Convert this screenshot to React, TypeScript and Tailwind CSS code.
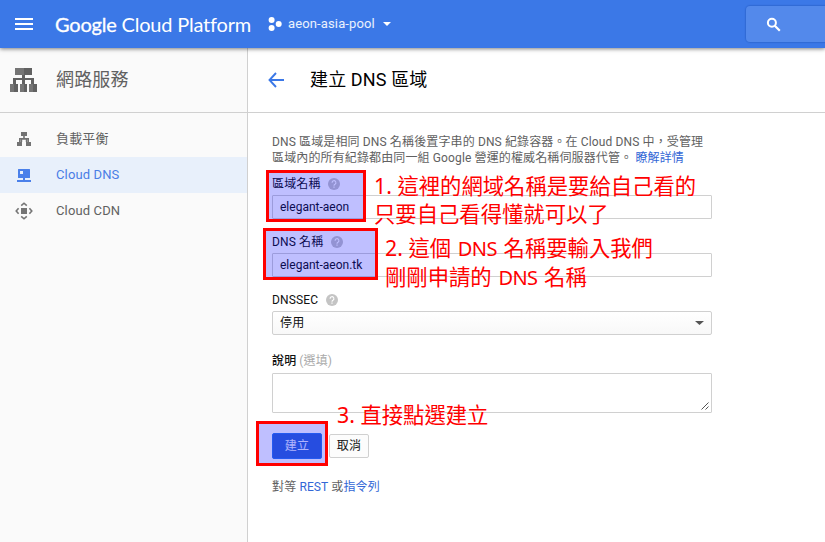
import type { ReactNode } from 'react';

const note = "absolute whitespace-pre text-[21.33px] leading-[28px] tracking-normal text-[#ff0000] font-['Noto_Sans','Noto_Sans_CJK_TC',sans-serif]";
const marker = 'pointer-events-none absolute border-[3px] border-[#ff0000] bg-[#0000ff]/25';

function Header() {
  return (
    <header className="relative z-10 flex h-12 shrink-0 items-center bg-[#3b78e7] text-white shadow-[0_1px_4px_rgba(0,0,0,0.5)]">
      <svg className="ml-[15px] shrink-0" width="18" height="12" fill="#fff">
        <path d="M0 0h18v2H0zM0 5h18v2H0zM0 10h18v2H0z" />
      </svg>
      <div className="ml-[22px] w-[198px] whitespace-nowrap font-['Lato',sans-serif] text-[20px] leading-6 tracking-[-0.2px]">
        <span className="[-webkit-text-stroke:0.3px_white]">Google</span> Cloud Platform
      </div>
      <svg className="ml-[15px] shrink-0" width="14" height="14" fill="#fff">
        <circle cx="3.6" cy="3" r="3" />
        <circle cx="3.6" cy="11" r="3" />
        <circle cx="10.7" cy="7" r="3" />
      </svg>
      <span className="ml-[6px] w-[88px] whitespace-nowrap text-[13px] text-white/90">aeon-asia-pool</span>
      <svg className="ml-[7px]" width="8" height="4" fill="#fff">
        <path d="M0 0h8L4 4z" />
      </svg>
      <div className="ml-auto flex h-9 w-[79px] items-center rounded-l-sm bg-[#5389eb] pl-[20px] shadow-[0_0_1px_1px_rgba(30,80,180,0.35)]">
        <svg width="15" height="15" fill="none" stroke="#fff">
          <circle cx="5.9" cy="5.7" r="4" strokeWidth="2" />
          <path d="M8.8 8.8l5 5" strokeWidth="2.2" />
        </svg>
      </div>
    </header>
  );
}

function BalanceIcon() {
  return (
    <svg width="14" height="14" fill="#737373">
      <path d="M4 0h6v4H4zM6.2 4h1.6v3H6.2zM2 6h10v1.6H2zM2 6h1.6v4H2zM10.4 6H12v4h-1.6zM0 10h5v4H0zM9 10h5v4H9z" />
      <path d="M4 6h6v1.600H4zM3.600 7.600h1.600V10H3.600zM8.800 7.600h1.600V10H8.800z" />
    </svg>
  );
}

function DnsIcon() {
  return (
    <svg width="14" height="13" fill="#4a80ea">
      <path fillRule="evenodd" d="M1.5 0h11q.5 0 .5.5v8q0 .5-.5.5h-11Q1 9 1 8.500v-8Q1 0 1.500 0zM3 2v3h3V2z" />
      <path d="M6 9h2v2H6zM0 11h14v2H0z" />
    </svg>
  );
}

function CdnIcon() {
  return (
    <svg width="18" height="18" fill="none" stroke="#757575" strokeWidth="1.6">
      <path d="M6 6h6v6H6z" fill="#757575" stroke="none" />
      <path d="M6.200 3.600L9 1.200l2.800 2.400M6.200 14.400L9 16.800l2.800-2.400M3.600 6.200L1.200 9l2.400 2.800M14.400 6.200L16.800 9l-2.400 2.800" />
    </svg>
  );
}

function NavItem({ icon, label, active }: { icon: ReactNode; label: string; active?: boolean }) {
  return (
    <a className={`flex h-9 items-center text-[13px] ${active ? 'bg-[#e8f0fb] text-[#4a7de6]' : 'text-[#616161]'}`}>
      <span className="flex w-12 justify-center">{icon}</span>
      <span className="ml-2">{label}</span>
    </a>
  );
}

function Sidebar() {
  return (
    <aside className="flex w-[248px] shrink-0 flex-col border-r border-[#d0d0d0] bg-[#fafafa]">
      <div className="flex h-[65px] items-center border-b border-[#d0d0d0]">
        <svg className="ml-[10px]" width="27" height="24" fill="#616161">
          <path d="M5 0h17v7H5zM12 7h3v4h-3zM3 10h21v2H3zM3 11h3v5H3zM12 11h3v5h-3zM21 11h3v5h-3zM0 16h8v8H0zM10 16h7v8h-7zM19 16h8v8h-8z" />
          <path d="M5 0h9v7H5zM0 16h4v8H0zM10 16h4v8h-4zM19 16h4v8h-4z" fill="#757575" />
        </svg>
        <h2 className="mb-[2px] ml-[19px] text-[18px] font-normal text-[#616161]">網路服務</h2>
      </div>
      <nav className="pt-2">
        <NavItem icon={<BalanceIcon />} label="負載平衡" />
        <NavItem icon={<DnsIcon />} label="Cloud DNS" active />
        <NavItem icon={<CdnIcon />} label="Cloud CDN" />
      </nav>
    </aside>
  );
}

function Help() {
  return (
    <svg width="12" height="12" viewBox="0 0 12 12" fill="none">
      <circle cx="6" cy="6" r="6" fill="#c4c4c4" />
      <path d="M4.100 4.700a1.900 1.900 0 1 1 2.900 1.500Q6 6.700 6 7.700" stroke="#fff" strokeWidth="1.100" />
      <path d="M5.400 8.500h1.200v1.200H5.400z" fill="#fff" />
    </svg>
  );
}

function Label({ text }: { text: string }) {
  return (
    <div className="flex h-[22px] items-center gap-[7.5px]">
      <span>{text}</span>
      <Help />
    </div>
  );
}

function Field({ label, value }: { label: string; value: string }) {
  return (
    <div className="mb-3">
      <Label text={label} />
      <input className="block h-6 w-full rounded-[1px] border border-[#d0d0d0] bg-white px-[7px] text-[12px] tracking-normal" defaultValue={value} />
    </div>
  );
}

function Latin({ children }: { children: string }) {
  return <span className="mx-[1.2px] text-[20px] tracking-[-0.6px]">{children}</span>;
}

export default function App() {
  return (
    <div className="relative flex h-[542px] w-[825px] flex-col overflow-hidden bg-white font-['Roboto','Noto_Sans_CJK_TC',sans-serif] text-[12px] tracking-[0.13px] text-[#111]">
      <Header />
      <div className="flex min-h-0 flex-1">
        <Sidebar />
        <main className="flex-1">
          <div className="flex h-[65px] items-center border-b border-[#d0d0d0] pl-5">
            <svg width="16" height="16" fill="none" stroke="#3b78e7" strokeWidth="1.900">
              <path d="M8 1L1.500 8 8 15M1.500 8H16" />
            </svg>
            <h1 className="mb-px ml-[26px] text-[18px] font-normal text-black">建立 DNS 區域</h1>
          </div>
          <form className="ml-6 w-[440px] pt-[21px]">
            <p className="mb-[7px] whitespace-nowrap leading-4 text-[#616161]">
              DNS 區域是相同 DNS 名稱後置字串的 DNS 紀錄容器。在 Cloud DNS 中，受管理
              <br />
              區域內的所有紀錄都由同一組 Google 營運的權威名稱伺服器代管。 <a className="text-[#3367d6]">瞭解詳情</a>
            </p>
            <Field label="區域名稱" value="elegant-aeon" />
            <Field label="DNS 名稱" value="elegant-aeon.tk" />
            <Label text="DNSSEC" />
            <div className="flex h-6 items-center justify-between rounded-[2px] border border-[#d0d0d0] bg-linear-to-b from-white to-[#f8f8f8] px-[7px]">
              <span>停用</span>
              <svg width="9" height="4" fill="#555">
                <path d="M0 0h9L4.500 4z" />
              </svg>
            </div>
            <div className="mt-[14px] flex h-6 items-center gap-[3px]">
              <span className="font-medium">說明</span>
              <span className="text-[#aaa]">(選填)</span>
            </div>
            <div className="flex h-10 items-end justify-end rounded-[1px] border border-[#d0d0d0] p-[2px]">
              <svg width="8" height="8" stroke="#555" strokeWidth="1">
                <path d="M.5 7.500l7-7M4.500 7.500l3-3" />
              </svg>
            </div>
            <div className="mt-5 flex items-center gap-[7px]">
              <button type="button" className="h-[26px] w-[50px] rounded-[2px] border border-[#3079ed] bg-[#3367d6] text-white/90">建立</button>
              <button type="button" className="h-6 w-10 rounded-[2px] border border-[#d0d0d0] bg-[#fcfcfc]">取消</button>
            </div>
            <p className="mt-[19px] leading-[18px] text-[#616161]">
              對等 <a className="text-[#3367d6]">REST</a> 或<a className="text-[#3367d6]">指令列</a>
            </p>
          </form>
        </main>
      </div>

      <div className={`${marker} left-[266px] top-[170px] h-[52px] w-[100px]`} />
      <div className={`${marker} left-[263px] top-[228px] h-[52px] w-[115px]`} />
      <div className={`${marker} left-[256px] top-[421px] h-[45px] w-[72px]`} />
      <div className={`${note} left-[374px] top-[172px]`}>{'1. 這裡的網域名稱是要給自己看的\n只要自己看得懂就可以了'}</div>
      <div className={`${note} left-[385px] top-[234px]`}>
        2. 這個 <Latin>DNS</Latin> 名稱要輸入我們{'\n'}剛剛申請的 <Latin>DNS</Latin> 名稱
      </div>
      <div className={`${note} left-[337px] top-[401px]`}>3. 直接點選建立</div>
    </div>
  );
}
